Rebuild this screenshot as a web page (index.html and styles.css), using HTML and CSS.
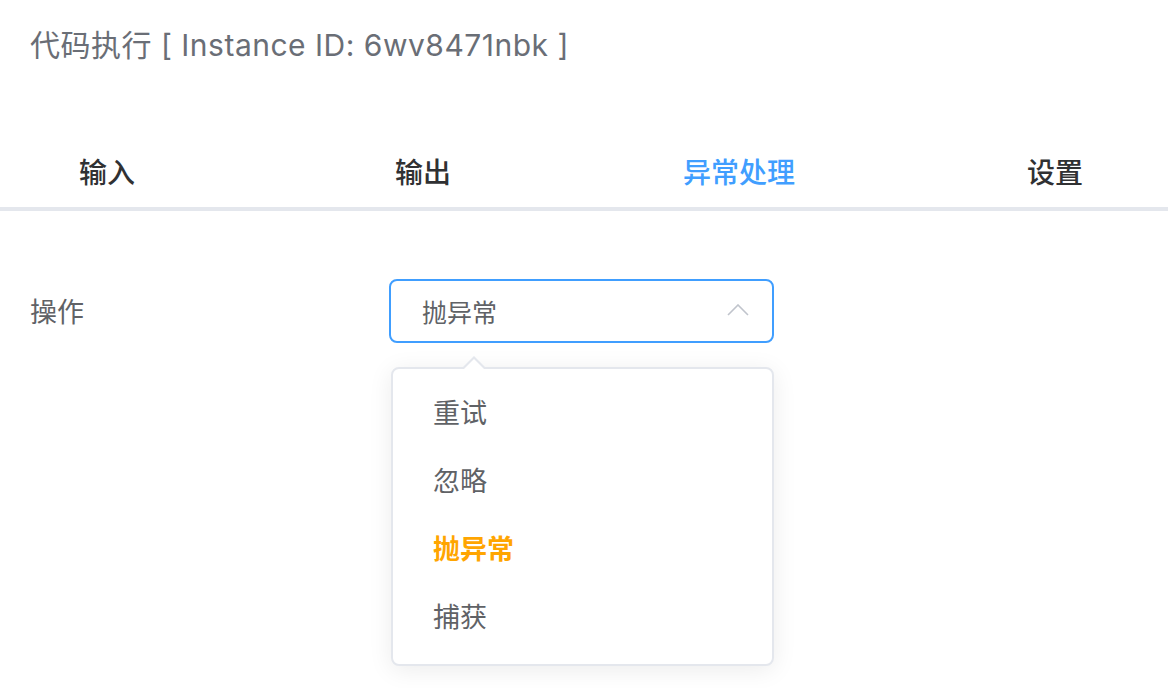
FILE: index.html
```html
<!DOCTYPE html>
<html lang="zh-CN">
<head>
<meta charset="utf-8">
<title>代码执行</title>
<link rel="stylesheet" href="styles.css">
</head>
<body>
<div class="page">
  <h1 class="title">代码执行 [ Instance ID: 6wv8471nbk ]</h1>
  <div class="tabs">
    <div class="tab">输入</div>
    <div class="tab">输出</div>
    <div class="tab active">异常处理</div>
    <div class="tab">设置</div>
  </div>
  <div class="form-row">
    <label class="label">操作</label>
    <div class="select">
      <div class="select-input">
        <span class="value">抛异常</span>
        <svg class="chevron" width="22" height="12" viewBox="0 0 22 12"><polyline points="1,11 11,1 21,11" fill="none" stroke="#c0c4cc" stroke-width="1.6"/></svg>
      </div>
      <ul class="dropdown">
        <li class="option">重试</li>
        <li class="option">忽略</li>
        <li class="option selected">抛异常</li>
        <li class="option">捕获</li>
      </ul>
    </div>
  </div>
</div>
</body>
</html>
```
FILE: styles.css
```css
* { box-sizing: border-box; }
html, body { margin: 0; padding: 0; background: #fff; }
body {
  font-family: "Inter", "Noto Sans CJK SC", sans-serif;
  width: 1168px;
  height: 688px;
  overflow: hidden;
}
.page { position: relative; }
.title {
  margin: 0;
  padding: 25px 30px 0;
  font-size: 30px;
  line-height: 40px;
  font-weight: 400;
  letter-spacing: 0.5px;
  color: #6a6e76;
}
.tabs {
  margin-top: 70px;
  display: flex;
  border-bottom: 4px solid #e4e7ed;
  overflow: hidden;
}
.tabs .tab {
  flex: 0 0 236px;
  margin-right: 80px;
  height: 76px;
  line-height: 72px;
  padding-top: 2px;
  margin-bottom: -4px;
  border-bottom: 4px solid transparent;
  text-align: center;
  font-size: 28px;
  font-weight: 500;
  color: #303133;
}
.tabs .tab:first-child { margin-left: -11px; }
.tabs .tab.active { color: #409eff; border-bottom-color: #409eff; }
.form-row {
  margin-top: 68px;
  display: flex;
  align-items: flex-start;
}
.label {
  width: 389px;
  padding-left: 30px;
  padding-top: 2px;
  line-height: 64px;
  font-size: 27px;
  color: #606266;
}
.select { position: relative; width: 385px; }
.select-input {
  height: 64px;
  border: 2px solid #409eff;
  border-radius: 8px;
  display: flex;
  align-items: center;
  justify-content: space-between;
  padding: 0 23px 0 31px;
}
.select-input .value { font-size: 25px; color: #606266; }
.chevron { display: block; margin-top: -2px; }
.dropdown {
  position: absolute;
  top: 88px;
  left: 2px;
  width: 383px;
  margin: 0;
  padding: 11px 0 12px;
  list-style: none;
  background: #fff;
  border: 2px solid #e4e7ed;
  border-radius: 8px;
  box-shadow: 0 4px 24px rgba(0, 0, 0, 0.08);
}
.dropdown::before,
.dropdown::after {
  content: "";
  position: absolute;
  left: 69px;
  width: 0;
  height: 0;
  border-left: 12px solid transparent;
  border-right: 12px solid transparent;
}
.dropdown::before { top: -13px; border-bottom: 12px solid #e4e7ed; }
.dropdown::after { top: -10px; border-bottom: 12px solid #fff; }
.option {
  height: 68px;
  line-height: 68px;
  padding-left: 40px;
  font-size: 27px;
  color: #606266;
}
.option.selected { color: #ffa500; font-weight: 700; }
```
